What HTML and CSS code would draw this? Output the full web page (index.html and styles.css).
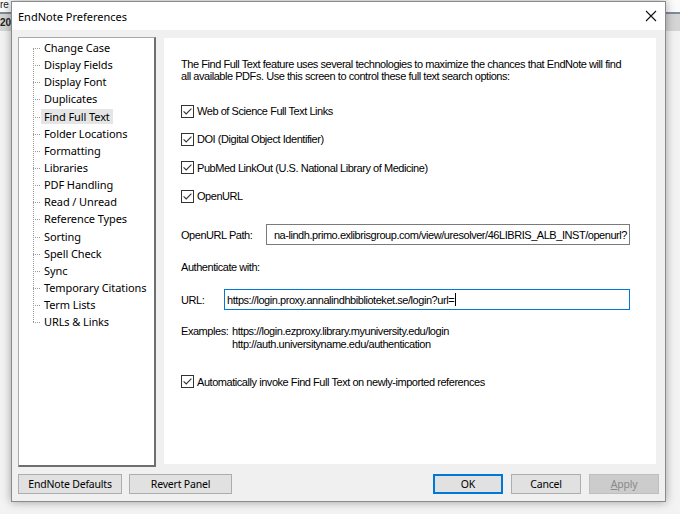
FILE: index.html
```html
<!DOCTYPE html>
<html>
<head>
<meta charset="utf-8">
<link rel="stylesheet" href="styles.css">
</head>
<body>
<div class="bg">
  <div class="bg-top">re</div>
  <div class="bg-line"></div>
  <div class="bg-bar">20</div>
</div>
<div class="dialog">
  <div class="titlebar">
    <span class="title">EndNote Preferences</span>
    <svg class="close" width="12" height="12" viewBox="0 0 12 12"><path d="M1 1 L11 11 M11 1 L1 11" stroke="#111" stroke-width="1.1" fill="none"/></svg>
  </div>
  <div class="body">
    <div class="main">
      <div class="treepanel">
        <ul class="tree">
          <li><span>Change Case</span></li>
          <li><span>Display Fields</span></li>
          <li><span>Display Font</span></li>
          <li><span>Duplicates</span></li>
          <li><span class="sel">Find Full Text</span></li>
          <li><span>Folder Locations</span></li>
          <li><span>Formatting</span></li>
          <li><span>Libraries</span></li>
          <li><span>PDF Handling</span></li>
          <li><span>Read / Unread</span></li>
          <li><span>Reference Types</span></li>
          <li><span>Sorting</span></li>
          <li><span>Spell Check</span></li>
          <li><span>Sync</span></li>
          <li><span>Temporary Citations</span></li>
          <li><span>Term Lists</span></li>
          <li><span>URLs &amp; Links</span></li>
        </ul>
      </div>
      <div class="content">
        <p class="intro">The Find Full Text feature uses several technologies to maximize the chances that EndNote will find<br>all available PDFs. Use this screen to control these full text search options:</p>
        <div class="checks">
          <div class="check"><svg class="box" width="13" height="13" viewBox="0 0 13 13"><rect x="0.5" y="0.5" width="12" height="12" fill="#fff" stroke="#333"/><path d="M2.6 6.4 L5.2 9 L10.4 3.6" stroke="#333" stroke-width="1.1" fill="none"/></svg><span>Web of Science Full Text Links</span></div>
          <div class="check"><svg class="box" width="13" height="13" viewBox="0 0 13 13"><rect x="0.5" y="0.5" width="12" height="12" fill="#fff" stroke="#333"/><path d="M2.6 6.4 L5.2 9 L10.4 3.6" stroke="#333" stroke-width="1.1" fill="none"/></svg><span>DOI (Digital Object Identifier)</span></div>
          <div class="check"><svg class="box" width="13" height="13" viewBox="0 0 13 13"><rect x="0.5" y="0.5" width="12" height="12" fill="#fff" stroke="#333"/><path d="M2.6 6.4 L5.2 9 L10.4 3.6" stroke="#333" stroke-width="1.1" fill="none"/></svg><span>PubMed LinkOut (U.S. National Library of Medicine)</span></div>
          <div class="check"><svg class="box" width="13" height="13" viewBox="0 0 13 13"><rect x="0.5" y="0.5" width="12" height="12" fill="#fff" stroke="#333"/><path d="M2.6 6.4 L5.2 9 L10.4 3.6" stroke="#333" stroke-width="1.1" fill="none"/></svg><span>OpenURL</span></div>
        </div>
        <div class="row row-path">
          <span class="label">OpenURL Path:</span>
          <div class="field field-path"><span>na-lindh.primo.exlibrisgroup.com/view/uresolver/46LIBRIS_ALB_INST/openurl?</span></div>
        </div>
        <div class="auth">Authenticate with:</div>
        <div class="row row-url">
          <span class="label">URL:</span>
          <div class="field field-focus"><span>https://login.proxy.annalindhbiblioteket.se/login?url=</span><i class="caret"></i></div>
        </div>
        <div class="examples">
          <span>Examples:</span>
          <div class="ex-list">
            <div>https://login.ezproxy.library.myuniversity.edu/login</div>
            <div>http://auth.universityname.edu/authentication</div>
          </div>
        </div>
        <div class="check check-auto"><svg class="box" width="13" height="13" viewBox="0 0 13 13"><rect x="0.5" y="0.5" width="12" height="12" fill="#fff" stroke="#333"/><path d="M2.6 6.4 L5.2 9 L10.4 3.6" stroke="#333" stroke-width="1.1" fill="none"/></svg><span>Automatically invoke Find Full Text on newly-imported references</span></div>
      </div>
    </div>
    <div class="buttons">
      <button class="btn btn-defaults">EndNote Defaults</button>
      <button class="btn btn-revert">Revert Panel</button>
      <span class="spacer"></span>
      <button class="btn btn-small btn-ok">OK</button>
      <button class="btn btn-small">Cancel</button>
      <button class="btn btn-small btn-disabled"><u>A</u>pply</button>
    </div>
  </div>
</div>
</body>
</html>
```
FILE: styles.css
```css
html, body {
  margin: 0;
  padding: 0;
}
body {
  width: 680px;
  height: 514px;
  overflow: hidden;
  position: relative;
  background: #f3f3f3;
  font-family: "Noto Sans", sans-serif;
}
.bg-top {
  height: 12px;
  background: #fbfbfb;
  font: 10px "Liberation Sans", sans-serif;
  line-height: 10px;
  overflow: hidden;
  color: #222;
}
.bg-line {
  height: 2px;
  background: #7f8b97;
}
.bg-bar {
  height: 17px;
  background: #d5d5d5;
  font: bold 10px "Liberation Sans", sans-serif;
  line-height: 17px;
  color: #222;
}
.dialog {
  position: absolute;
  left: 11px;
  top: 1px;
  width: 655px;
  height: 501px;
  box-sizing: border-box;
  border: 1px solid #8a8a8a;
  background: #f0f0f0;
  box-shadow: 0 0 9px rgba(0, 0, 0, 0.35);
  display: flex;
  flex-direction: column;
}
.titlebar {
  height: 28px;
  background: #fff;
  display: flex;
  align-items: center;
  padding-left: 6px;
  padding-right: 8px;
}
.title {
  font-size: 11px;
  color: #000;
  flex: 1;
}
.close {
  display: block;
}
.body {
  flex: 1;
  padding: 7px 8px 0 6px;
  display: flex;
  flex-direction: column;
}
.main {
  display: flex;
  gap: 8px;
  height: 430px;
}
.treepanel {
  width: 138px;
  height: 430px;
  box-sizing: border-box;
  background: #fff;
  border-left: 1px solid #a8a8a8;
  border-top: 1px solid #a8a8a8;
  border-right: 2px solid #6f6f6f;
  border-bottom: 2px solid #6f6f6f;
  padding-top: 1px;
}
.tree {
  list-style: none;
  margin: 0 0 0 14px;
  padding: 0;
  position: relative;
}
.tree::before {
  content: "";
  position: absolute;
  left: 0;
  top: 9px;
  bottom: 8px;
  border-left: 1px dotted #9a9a9a;
}
.tree li {
  height: 17.15px;
  line-height: 17.15px;
  padding-left: 8px;
  position: relative;
  font-size: 11px;
  letter-spacing: -0.1px;
  color: #000;
  white-space: nowrap;
}
.tree li::before {
  content: "";
  position: absolute;
  left: 0;
  top: 9px;
  width: 7px;
  border-top: 1px dotted #9a9a9a;
}
.tree li span {
  display: inline-block;
  padding: 0 3px;
  line-height: 15px;
}
.tree li .sel {
  background: #e5e5e5;
}
.content {
  width: 492px;
  height: 426px;
  margin-top: 1px;
  background: #fff;
  box-sizing: border-box;
  padding: 20px 0 0 17px;
  font-family: "Liberation Sans", sans-serif;
  font-size: 11px;
  letter-spacing: -0.45px;
  color: #000;
}
.intro {
  margin: 0;
  line-height: 12px;
}
.checks {
  margin-top: 15px;
}
.check {
  height: 28.3px;
  display: flex;
  align-items: center;
  gap: 3px;
}
.box {
  display: block;
  flex: none;
}
.row {
  display: flex;
  align-items: center;
  height: 21px;
}
.row-path {
  margin-top: 14px;
}
.row-path .label {
  width: 85px;
  flex: none;
}
.row-url {
  margin-top: 16px;
}
.row-url .label {
  width: 43px;
  flex: none;
}
.field {
  height: 21px;
  box-sizing: border-box;
  border: 1px solid #7a7a7a;
  background: #fff;
  display: flex;
  align-items: center;
  white-space: nowrap;
  overflow: hidden;
}
.field-path {
  width: 364px;
  justify-content: flex-end;
  padding-right: 2px;
}
.field-path span {
  flex: none;
}
.field-focus {
  width: 406px;
  border-color: #0078d7;
  padding-left: 2px;
}
.caret {
  display: inline-block;
  width: 1px;
  height: 13px;
  background: #000;
  margin-left: 1px;
}
.auth {
  margin-top: 16px;
  line-height: 12px;
}
.examples {
  margin-top: 15px;
  display: grid;
  grid-template-columns: 51px auto;
  line-height: 13.3px;
}
.check-auto {
  margin-top: 16px;
  height: 28px;
}
.buttons {
  display: flex;
  gap: 7px;
  margin-top: 7px;
  margin-right: -2px;
  height: 20px;
}
.spacer {
  flex: 1;
}
.btn {
  height: 20px;
  box-sizing: border-box;
  background: #e1e1e1;
  border: 1px solid #adadad;
  font-family: "Noto Sans", sans-serif;
  font-size: 10.5px;
  letter-spacing: -0.2px;
  color: #000;
  padding: 0;
  margin: 0;
}
.btn-defaults {
  width: 104px;
}
.btn-revert {
  width: 103px;
}
.btn-small {
  width: 70px;
  margin-left: 1px;
}
.btn-ok {
  border-color: #0078d7;
  box-shadow: inset 0 0 0 1px #0078d7;
}
.btn-disabled {
  background: #cccccc;
  border-color: #bfbfbf;
  color: #8a8a8a;
}
```
